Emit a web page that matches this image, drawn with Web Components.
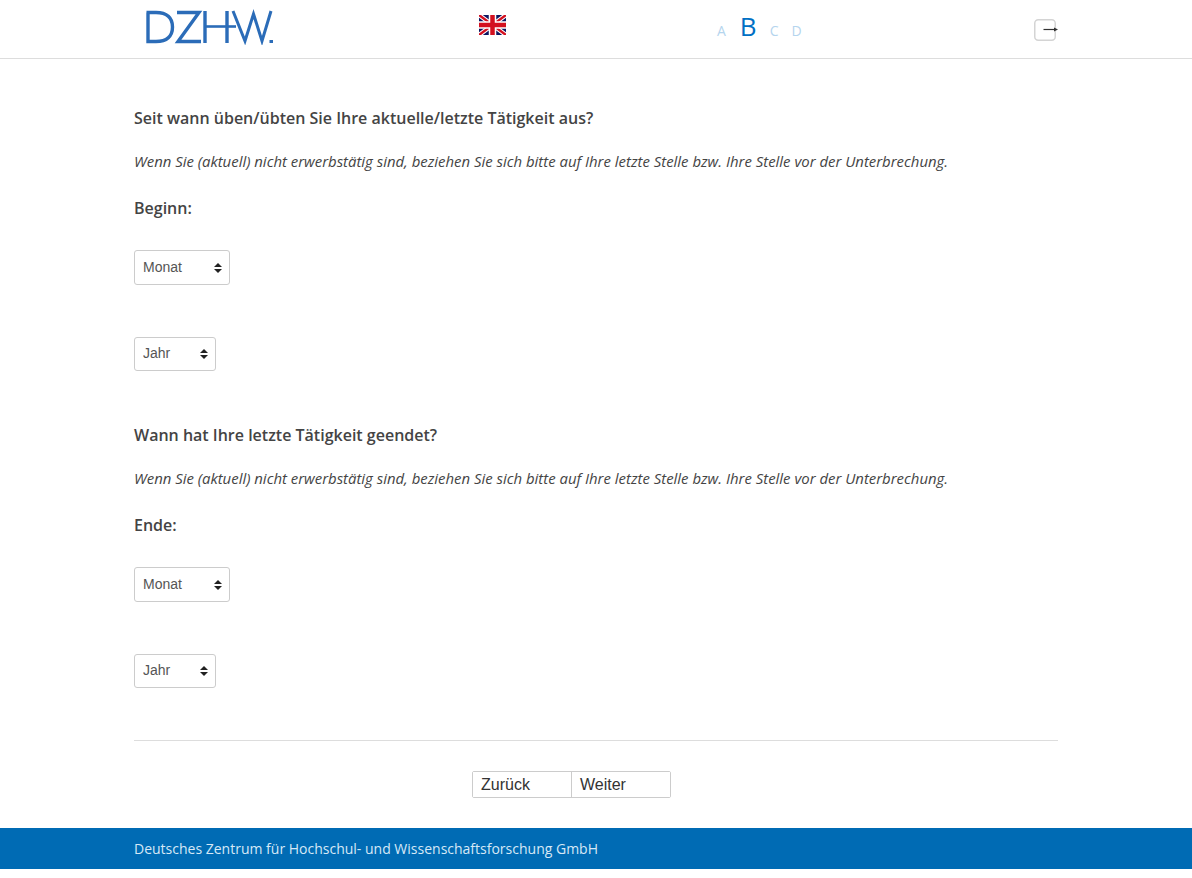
<!DOCTYPE html>
<html lang="de">
<head>
<meta charset="utf-8">
<title>DZHW</title>
<style>
  html, body { margin: 0; background: #fff; }
  body { font-family: "Open Sans", sans-serif; color: #444; height: 878px; overflow: hidden; }
</style>
</head>
<body>
<survey-header></survey-header>
<survey-page>
  <date-question heading="Seit wann üben/übten Sie Ihre aktuelle/letzte Tätigkeit aus?" label="Beginn:">
    Wenn Sie (aktuell) nicht erwerbstätig sind, beziehen Sie sich bitte auf Ihre letzte Stelle bzw. Ihre Stelle vor der Unterbrechung.
  </date-question>
  <date-question heading="Wann hat Ihre letzte Tätigkeit geendet?" label="Ende:">
    Wenn Sie (aktuell) nicht erwerbstätig sind, beziehen Sie sich bitte auf Ihre letzte Stelle bzw. Ihre Stelle vor der Unterbrechung.
  </date-question>
  <nav-buttons></nav-buttons>
</survey-page>
<survey-footer>Deutsches Zentrum für Hochschul- und Wissenschaftsforschung GmbH</survey-footer>

<script>
// Header with logo, language flag, font size switch and logout
class SurveyHeader extends HTMLElement {
  constructor() {
    super();
    this.attachShadow({ mode: 'open' }).innerHTML = `
<style>
  :host { display: block; height: 58px; border-bottom: 1px solid #ddd; }
  .bar { display: grid; grid-template-columns: 345px 238px 317px 1fr; width: 924px; height: 58px; margin-left: 134px; }
  .logo { display: block; margin: 9px 0 0 11px; }
  .flag { display: block; margin-top: 15px; }
  .sizes { display: flex; align-items: baseline; height: 38px; font-size: 14px; color: #b5d5ee; }
  .sizes span { margin-right: 13px; }
  .sizes span:first-child { margin-right: 14px; }
  .sizes .on { font-size: 26px; font-weight: 500; line-height: 52px; color: #0070c4; margin-right: 13px; }
  .logout { justify-self: end; margin-top: 19px; width: 24px; height: 22px; overflow: visible; }
</style>
<div class="bar">
  <svg class="logo" width="128" height="36" viewBox="0 0 128 36" fill="none" stroke="#2b6cb8" stroke-width="3.4">
    <path d="M3 3.500V32.500H11C22 32.500 27.500 27 27.500 18S22 3.500 11 3.500H1.500"/>
    <path d="M32 3.500H54L33 32.500H56"/>
    <path d="M60 2V34M82 2V34"/>
    <path d="M60 17.500H91" stroke-width="2.600"/>
    <path d="M88 2L100 32L108.500 5L117 32L126 2" stroke-width="3"/>
    <rect x="124.500" y="31" width="3.500" height="3" fill="#2b6cb8" stroke="none"/>
  </svg>
  <svg class="flag" width="27" height="20" viewBox="0 0 27 20">
    <rect width="27" height="20" fill="#0c1560"/>
    <path d="M0 0L27 20M27 0L0 20" stroke="#fff" stroke-width="4.500"/>
    <path d="M0 0L27 20M27 0L0 20" stroke="#d3101f" stroke-width="2.400"/>
    <path d="M13.500 0V20M0 10H27" stroke="#fff" stroke-width="7.500"/>
    <path d="M13.500 0V20M0 10H27" stroke="#d3101f" stroke-width="4.500"/>
  </svg>
  <div class="sizes"><span>A</span><span class="on">B</span><span>C</span><span>D</span></div>
  <svg class="logout" viewBox="0 0 24 22" fill="none">
    <rect x="0.750" y="0.750" width="20.500" height="20.500" rx="3.500" stroke="#d4d4d4" stroke-width="1.500"/>
    <path d="M9.500 10.500H21" stroke="#333" stroke-width="1.200"/>
    <path d="M20 8.500L24 10.500L20 12.500Z" fill="#333"/>
  </svg>
</div>`;
  }
}

// Select with its own double arrow
const selectTemplate = document.createElement('template');
selectTemplate.innerHTML = `
<style>
  :host { display: block; position: relative; }
  select {
    display: block; appearance: none; -webkit-appearance: none; background: #fff; color: #555;
    border: 1px solid #ccc; border-radius: 3px; padding: 0 8px 2px;
    font: 14px "Liberation Sans", Arial, sans-serif; box-sizing: border-box; height: 100%; width: 100%;
  }
  svg { position: absolute; right: 8px; top: 50%; margin-top: -5px; pointer-events: none; }
</style>
<select></select>
<svg width="8" height="10" viewBox="0 0 8 10" fill="#222"><path d="M4 0L8 4H0ZM4 10L0 6H8Z"/></svg>`;

class SurveySelect extends HTMLElement {
  constructor() {
    super();
    this.attachShadow({ mode: 'open' }).appendChild(selectTemplate.content.cloneNode(true));
    const option = document.createElement('option');
    option.textContent = this.getAttribute('placeholder');
    this.shadowRoot.querySelector('select').appendChild(option);
  }
}

// One question: heading, hint, label and the month/year selects
class DateQuestion extends HTMLElement {
  constructor() {
    super();
    this.attachShadow({ mode: 'open' }).innerHTML = `
<style>
  :host { display: block; margin-bottom: 53px; }
  h2 { margin: 0 0 21px; font-size: 16px; line-height: 22px; font-weight: 600; color: #444; }
  p { margin: 0 0 25px; font-size: 14.920px; line-height: 22px; font-style: italic; color: #444; }
  h3 { margin: 0 0 31px; font-size: 16px; line-height: 22px; font-weight: 600; color: #444; }
  .month { width: 96px; height: 35px; margin-bottom: 52px; }
  .year { width: 82px; height: 34px; }
</style>
<h2></h2>
<p><slot></slot></p>
<h3></h3>
<survey-select class="month" placeholder="Monat"></survey-select>
<survey-select class="year" placeholder="Jahr"></survey-select>`;
    this.shadowRoot.querySelector('h2').textContent = this.getAttribute('heading');
    this.shadowRoot.querySelector('h3').textContent = this.getAttribute('label');
  }
}

class NavButtons extends HTMLElement {
  constructor() {
    super();
    this.attachShadow({ mode: 'open' }).innerHTML = `
<style>
  :host { display: flex; justify-content: center; margin-top: -1px; border-top: 1px solid #ddd; padding-top: 30px; }
  .group { display: flex; margin-right: 49px; border: 1px solid #ccc; border-radius: 2px; height: 27px; box-sizing: border-box; }
  button {
    width: 98px; padding: 0 8px; text-align: left; background: #fff; color: #333; border: 0;
    font: 16px "Liberation Sans", Arial, sans-serif; box-sizing: border-box;
  }
  button + button { border-left: 1px solid #ccc; width: 99px; }
</style>
<div class="group"><button>Zurück</button><button>Weiter</button></div>`;
  }
}

class SurveyPage extends HTMLElement {
  constructor() {
    super();
    this.attachShadow({ mode: 'open' }).innerHTML = `
<style>
  :host { display: block; width: 924px; height: 769px; box-sizing: border-box; margin-left: 134px; padding-top: 48px; }
</style>
<slot></slot>`;
  }
}

class SurveyFooter extends HTMLElement {
  constructor() {
    super();
    this.attachShadow({ mode: 'open' }).innerHTML = `
<style>
  :host { display: block; height: 41px; background: #006bb4; color: #d6e8f6; padding-left: 134px; font-size: 14px; line-height: 41px; }
</style>
<slot></slot>`;
  }
}

customElements.define('survey-header', SurveyHeader);
customElements.define('survey-select', SurveySelect);
customElements.define('date-question', DateQuestion);
customElements.define('nav-buttons', NavButtons);
customElements.define('survey-page', SurveyPage);
customElements.define('survey-footer', SurveyFooter);
</script>
</body>
</html>
